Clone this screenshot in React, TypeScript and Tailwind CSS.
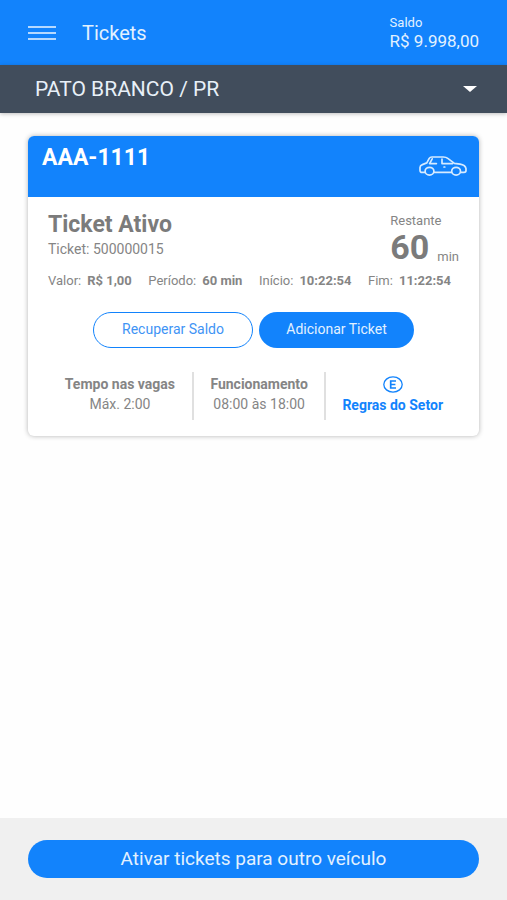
type Detail = {
  label: string;
  value: string;
};

const details: Detail[] = [
  { label: "Valor:", value: "R$ 1,00" },
  { label: "Período:", value: "60 min" },
  { label: "Início:", value: "10:22:54" },
  { label: "Fim:", value: "11:22:54" },
];

function CarIcon() {
  return (
    <svg
      viewBox="0 0 48 20"
      className="h-5 w-12"
      fill="none"
      stroke="#d6ebff"
      strokeWidth="1.7"
      strokeLinecap="round"
      strokeLinejoin="round"
      aria-hidden="true"
    >
      <path d="M5.8 16.4H3.2C1.6 16.4 1 15.6 1 14.2V11.4C1 10 1.8 9.2 3.4 8.6L7.8 6.9L10.2 2.4C10.8 1.4 11.4 1 12.8 1H24.4C26.4 1 27.6 1.4 28.8 2.4L35.4 7.4L41 8.2C44.6 8.8 46.6 10.2 47 12.6V14.6C47 15.8 46.4 16.4 45 16.4H41.8M15.2 16.4H32.4" />
      <ellipse cx="10.5" cy="15.2" rx="4.4" ry="3.9" />
      <ellipse cx="37.1" cy="15.2" rx="4.4" ry="3.9" />
      <path d="M13.2 2.8L10.6 7.6H17.4M23 3.2V7.6H33.6" />
      <path d="M25 11H25.8" />
    </svg>
  );
}

function RulesIcon() {
  return (
    <svg
      viewBox="0 0 20 17"
      className="h-[17px] w-5"
      fill="none"
      stroke="currentColor"
      aria-hidden="true"
    >
      <ellipse cx="10" cy="8.5" rx="9.2" ry="7.6" strokeWidth="1.3" />
      <path d="M13 5H7.7V12H13M7.7 8.5H12.4" strokeWidth="1.7" />
    </svg>
  );
}

function Header() {
  return (
    <header className="flex h-[65px] items-center bg-[#1283fc] px-7 text-[#e2f1ff]">
      <button type="button" aria-label="Menu" className="flex w-7 flex-col gap-1">
        <span className="h-0.5 bg-[#b5d9ff]" />
        <span className="h-0.5 bg-[#b5d9ff]" />
        <span className="h-0.5 bg-[#b5d9ff]" />
      </button>
      <h1 className="ml-[26px] text-xl leading-6">Tickets</h1>
      <div className="ml-auto">
        <p className="text-[13px] leading-4">Saldo</p>
        <p className="text-[17px] leading-5">R$ 9.998,00</p>
      </div>
    </header>
  );
}

function CitySelect() {
  return (
    <div className="relative h-12 bg-[#414d5c] text-[#e8f0f8] shadow-[0_1px_4px_rgba(0,0,0,0.25)]">
      <select
        aria-label="Cidade"
        className="h-full w-full appearance-none bg-transparent px-[35px] pt-0.5 text-[21px] outline-none"
      >
        <option>PATO BRANCO / PR</option>
      </select>
      <svg
        viewBox="0 0 14 6"
        className="pointer-events-none absolute top-[21px] right-[30px] h-1.5 w-3.5"
        aria-hidden="true"
      >
        <path d="M0 0H14L7 6Z" fill="#fff" />
      </svg>
    </div>
  );
}

function TicketCard() {
  return (
    <article className="overflow-hidden rounded-md bg-white text-[#858585] shadow-[0_0_5px_rgba(0,0,0,0.3)]">
      <div className="flex h-[61px] justify-between bg-[#1283fc] pr-3 pl-3.5 text-white">
        <h2 className="pt-2.5 text-[23px] leading-6 font-bold">AAA-1111</h2>
        <div className="pt-5">
          <CarIcon />
        </div>
      </div>

      <div className="px-5 py-4">
        <div className="flex justify-between">
          <div>
            <h3 className="text-[23px] leading-6 font-bold text-[#7b7b7b]">Ticket Ativo</h3>
            <p className="text-sm leading-6">Ticket: 500000015</p>
          </div>
          <div>
            <p className="text-[13px] leading-4">Restante</p>
            <p className="flex items-end gap-2">
              <strong className="text-[34px] leading-9 font-bold text-[#7b7b7b]">60</strong>
              <span className="text-[13px] leading-4">min</span>
            </p>
          </div>
        </div>

        <dl className="mt-2 mr-2 flex justify-between text-[13px] leading-4">
          {details.map((item) => (
            <div key={item.label} className="flex gap-1.5">
              <dt>{item.label}</dt>
              <dd className="font-bold">{item.value}</dd>
            </div>
          ))}
        </dl>

        <div className="mt-[23px] flex justify-center gap-1.5">
          <button
            type="button"
            className="h-9 w-40 rounded-full border border-[#1283fc] pb-0.5 text-sm text-[#3f94f5]"
          >
            Recuperar Saldo
          </button>
          <button
            type="button"
            className="h-9 w-[155px] rounded-full bg-[#1283fc] pb-0.5 text-sm text-[#e2f1ff]"
          >
            Adicionar Ticket
          </button>
        </div>

        <div className="mt-6 grid grid-cols-[11fr_10fr_10fr] text-center text-sm leading-5">
          <div className="h-12 border-r-2 border-[#e0e0e0] pt-0.5">
            <p className="font-bold">Tempo nas vagas</p>
            <p>Máx. 2:00</p>
          </div>
          <div className="h-12 border-r-2 border-[#e0e0e0] pt-0.5">
            <p className="font-bold">Funcionamento</p>
            <p>08:00 às 18:00</p>
          </div>
          <a href="#regras" className="flex h-12 flex-col items-center gap-0.5 pt-1 font-bold text-[#1283fc]">
            <RulesIcon />
            <span>Regras do Setor</span>
          </a>
        </div>
      </div>
    </article>
  );
}

export default function App() {
  return (
    <div className="flex min-h-screen flex-col bg-[#fefefe] font-[Roboto,sans-serif]">
      <Header />
      <CitySelect />
      <main className="flex-1 px-7 pt-[23px] pb-6">
        <TicketCard />
      </main>
      <footer className="bg-[#f0f0f0] px-7 py-[22px]">
        <button
          type="button"
          className="h-[38px] w-full rounded-full bg-[#1283fc] text-[19px] text-[#e2f1ff]"
        >
          Ativar tickets para outro veículo
        </button>
      </footer>
    </div>
  );
}
